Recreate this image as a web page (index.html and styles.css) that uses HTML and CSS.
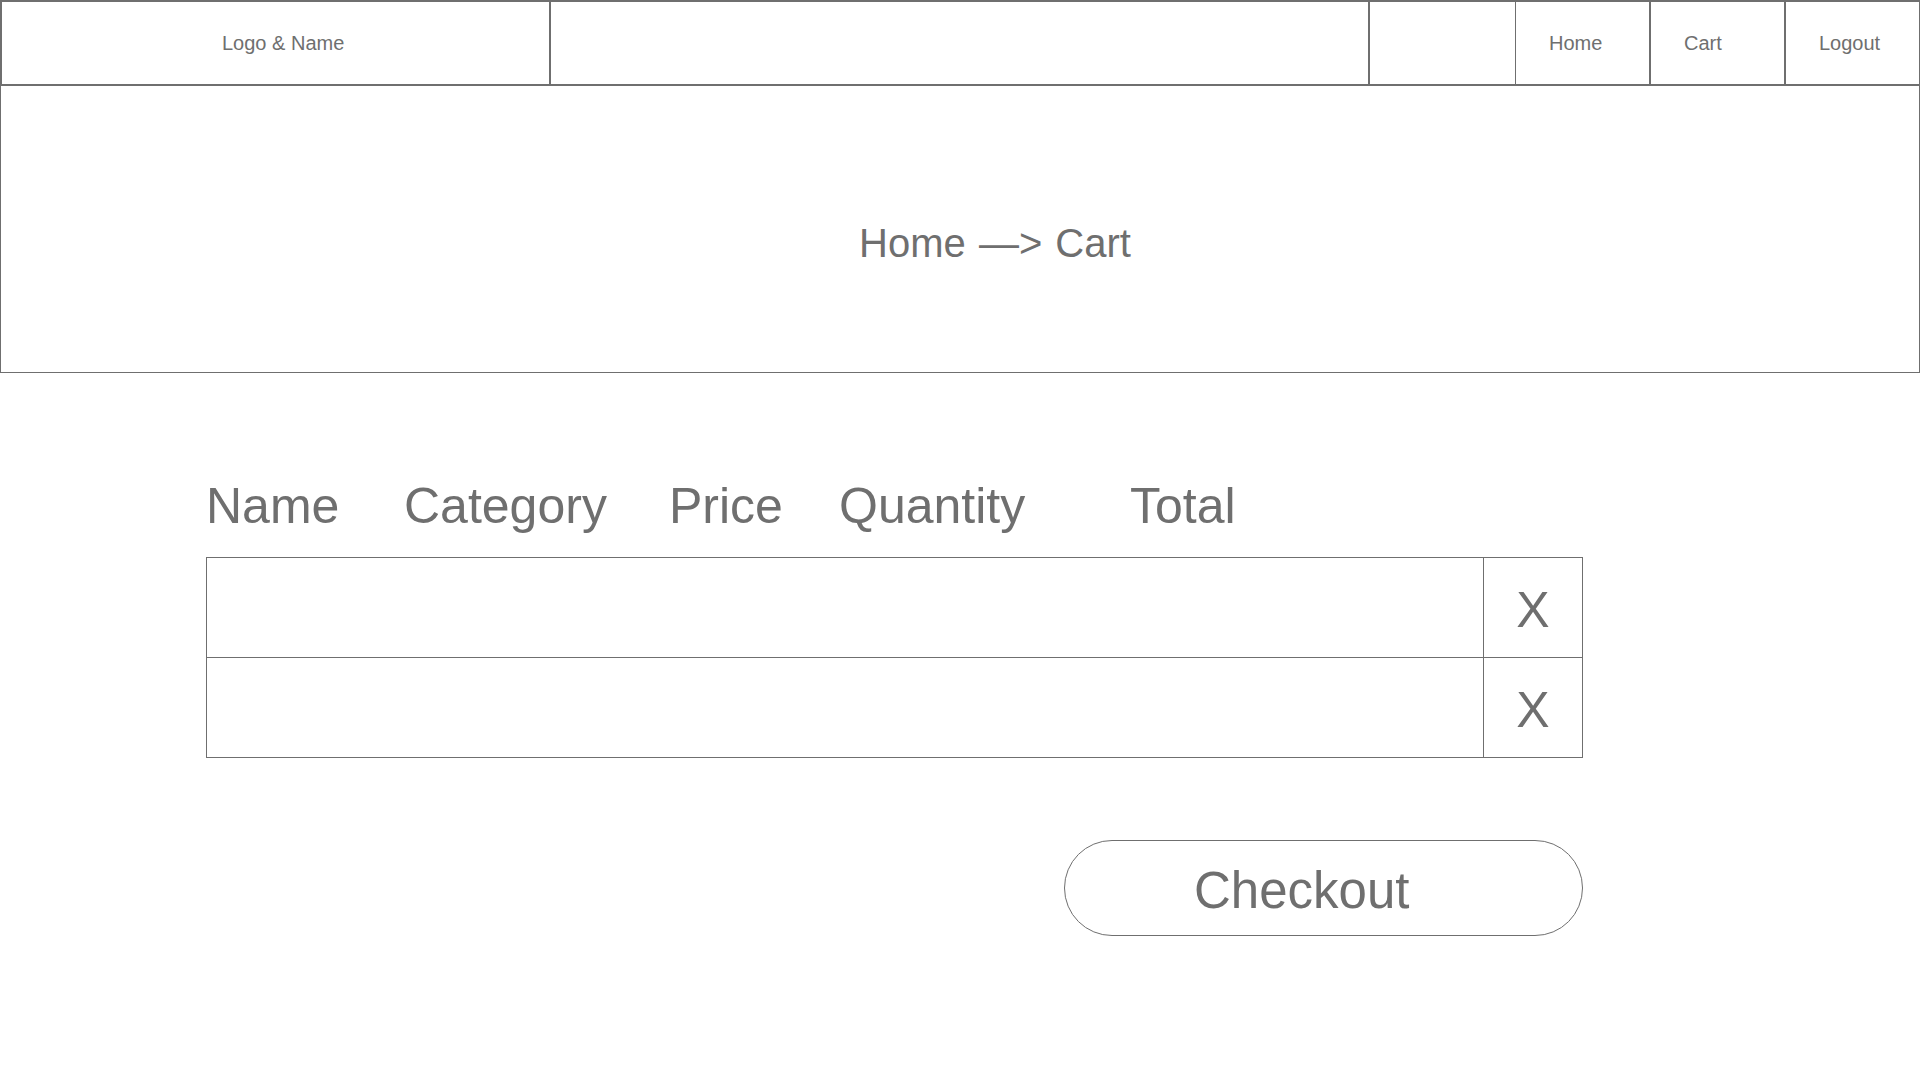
FILE: index.html
```html
<!DOCTYPE html>
<html lang="en">
<head>
<meta charset="utf-8">
<title>Cart</title>
<link rel="stylesheet" href="styles.css">
</head>
<body>
<header class="topbar">
  <div class="cell cell-logo">Logo &amp; Name</div>
  <div class="cell cell-search"></div>
  <div class="cell cell-blank"></div>
  <div class="cell cell-nav">Home</div>
  <div class="cell cell-nav">Cart</div>
  <div class="cell cell-nav cell-last">Logout</div>
</header>
<section class="hero">
  <div class="crumb">Home —&gt; Cart</div>
</section>
<main class="content">
  <div class="cols">
    <span>Name</span>
    <span>Category</span>
    <span>Price</span>
    <span>Quantity</span>
    <span>Total</span>
  </div>
  <div class="table">
    <div class="row">
      <div class="row-main"></div>
      <div class="row-x">X</div>
    </div>
    <div class="row">
      <div class="row-main"></div>
      <div class="row-x">X</div>
    </div>
  </div>
  <div class="actions">
    <button class="checkout" type="button">Checkout</button>
  </div>
</main>
</body>
</html>
```
FILE: styles.css
```css
* { box-sizing: border-box; }
html, body { margin: 0; padding: 0; background: #ffffff; }
body {
  width: 1920px;
  height: 1080px;
  font-family: "Liberation Sans", Arial, Helvetica, sans-serif;
  color: #6f6f6f;
  overflow: hidden;
}

.topbar {
  display: flex;
  height: 86px;
  border: 2px solid #6f6f6f;
  border-right-width: 1px;
}
.cell {
  display: flex;
  align-items: center;
  font-size: 20px;
  border-right: 2px solid #6f6f6f;
  padding-top: 1px;
}
.cell-logo { width: 549px; padding-left: 220px; }
.cell-search { width: 819px; }
.cell-blank { width: 146px; border-right-width: 1px; }
.cell-nav { width: 135px; padding-left: 33px; }
.cell-last { flex: 1; border-right: none; }

.hero {
  height: 287px;
  border: 1px solid #6f6f6f;
  border-top: none;
  display: flex;
  justify-content: center;
  align-items: center;
  padding-top: 28px;
}
.crumb {
  font-size: 40px;
  padding-left: 70px;
  word-spacing: 2px;
}

.content {
  padding-left: 206px;
  width: 1583px;
}
.cols {
  margin-top: 103px;
  display: grid;
  grid-template-columns: 198px 265px 170px 291px auto;
  font-size: 50px;
  line-height: 60px;
}
.table {
  margin-top: 21px;
  border: 1px solid #6f6f6f;
}
.row {
  display: flex;
  height: 100px;
  border-bottom: 1px solid #6f6f6f;
}
.row:first-child .row-main { border-bottom: 1px solid #6f6f6f; }
.row:first-child { border-bottom: none; }
.row:last-child { height: 99px; border-bottom: none; }
.row-main { flex: 1; }
.row-x {
  width: 99px;
  border-left: 1px solid #6f6f6f;
  display: flex;
  align-items: center;
  justify-content: center;
  font-size: 50px;
  padding-top: 4px;
}
.row:first-child .row-x { border-bottom: 1px solid #6f6f6f; }

.actions {
  display: flex;
  justify-content: flex-end;
  margin-top: 82px;
}
.checkout {
  width: 519px;
  height: 96px;
  border: 1px solid #6f6f6f;
  border-radius: 48px;
  background: #ffffff;
  font-family: "Liberation Sans", Arial, Helvetica, sans-serif;
  font-size: 51px;
  color: #6f6f6f;
  display: flex;
  align-items: center;
  justify-content: flex-start;
  padding: 4px 0 0 129px;
}
```
